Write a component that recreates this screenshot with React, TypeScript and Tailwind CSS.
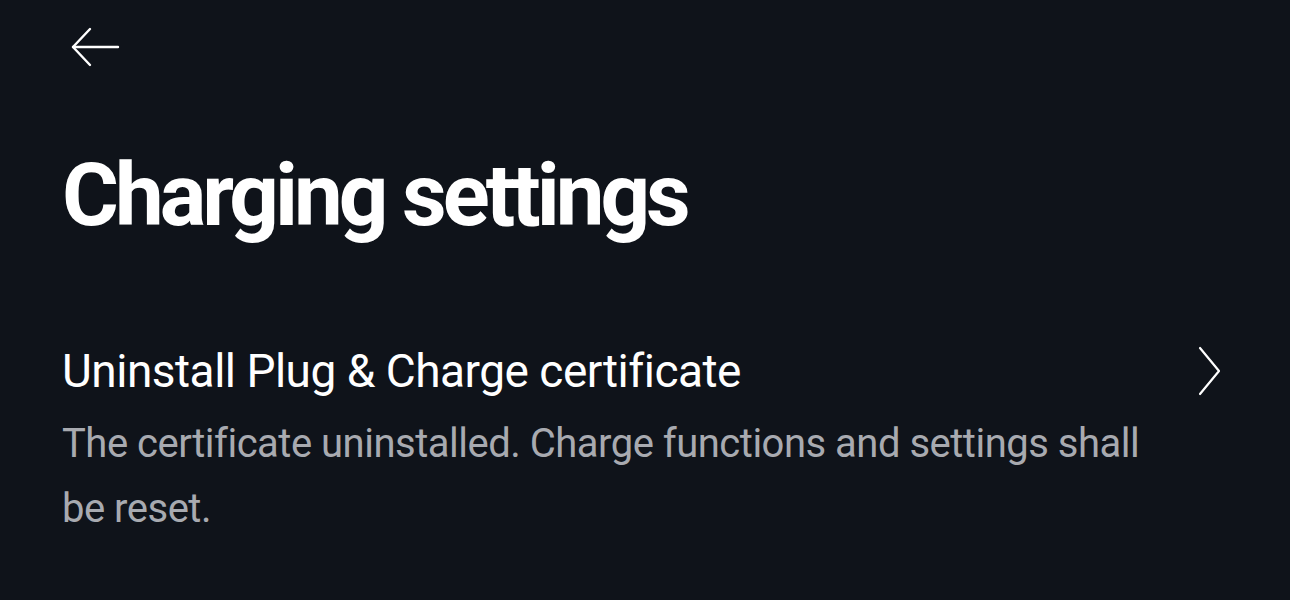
export default function App() {
  return (
    <div className="h-[600px] w-full overflow-hidden bg-[#0f131a] text-white" style={{ fontFamily: 'Roboto, "Noto Sans", sans-serif' }}>
      <div className="px-[62px] pt-[24px]">
        <button type="button" className="ml-[8px] flex h-[46px] w-[52px] items-center">
          <svg width="52" height="42" viewBox="0 0 52 42" fill="none" stroke="white" strokeWidth="2.4" strokeLinecap="round" strokeLinejoin="round">
            <path d="M48 21H3" />
            <path d="M20 3L3 21L20 39" />
          </svg>
        </button>
        <h1 className="mt-[82px] text-[87px] font-bold leading-none tracking-[-4px]">Charging settings</h1>
        <div className="mt-[104px] flex items-start justify-between">
          <div className="w-[1110px]">
            <h2 className="text-[46px] leading-[56px] tracking-[-0.5px]">Uninstall Plug &amp; Charge certificate</h2>
            <p className="mt-[12px] text-[40px] leading-[65px] tracking-[-0.5px] text-[#a8aab0]">
              The certificate uninstalled. Charge functions and settings shall be reset.
            </p>
          </div>
          <svg className="mr-[6px] mt-[3px]" width="24" height="50" viewBox="0 0 24 50" fill="none" stroke="white" strokeWidth="2.2" strokeLinecap="round" strokeLinejoin="round">
            <path d="M2 2L21 25L2 48" />
          </svg>
        </div>
      </div>
    </div>
  );
}
